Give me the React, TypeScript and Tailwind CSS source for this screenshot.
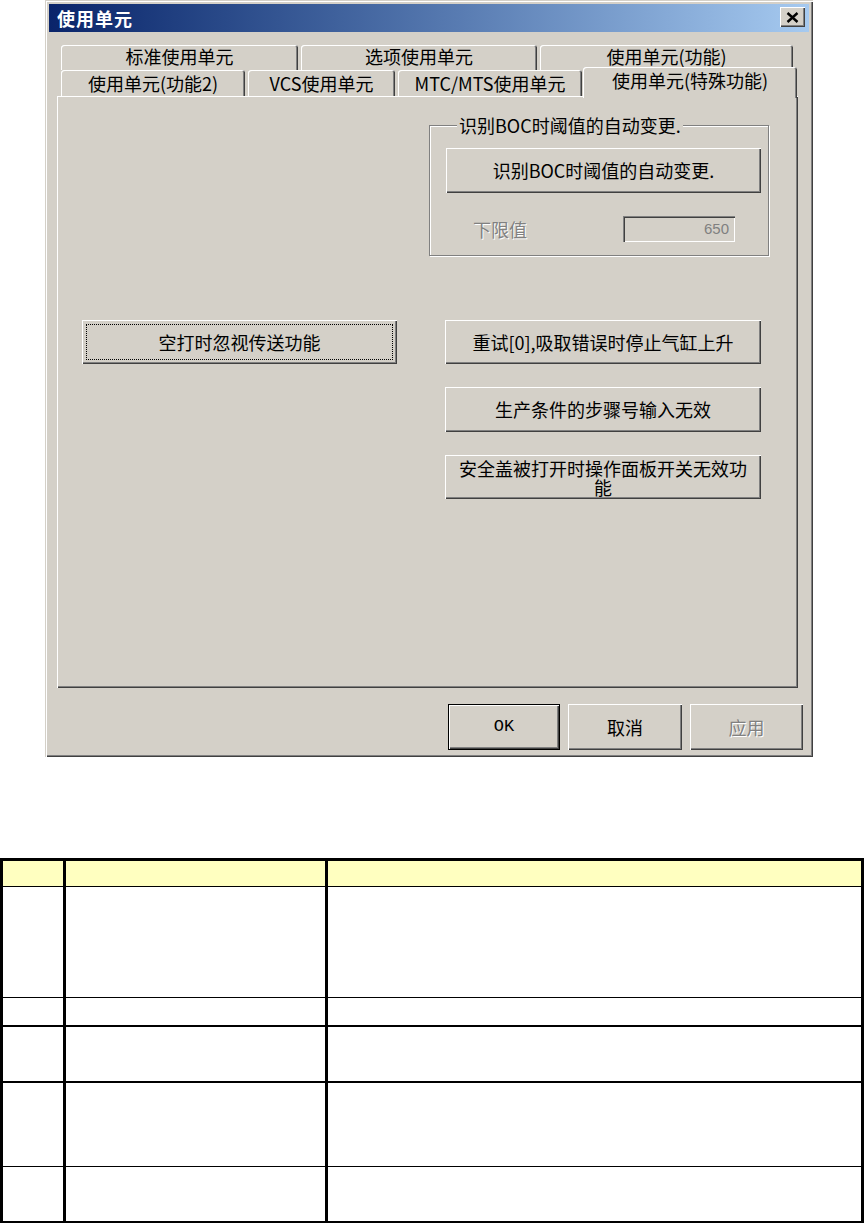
import React from 'react'

// classic win2000 bevels
const raised =
  'shadow-[inset_1px_1px_0_#ffffff,inset_-1px_-1px_0_#404040,inset_-2px_-2px_0_#808080]'
const defaultRaised =
  'shadow-[inset_0_0_0_1px_#000000,inset_2px_2px_0_#ffffff,inset_-2px_-2px_0_#404040,inset_-3px_-3px_0_#808080]'
const sunken =
  'shadow-[inset_1px_1px_0_#808080,inset_2px_2px_0_#404040,inset_-1px_-1px_0_#ffffff,inset_-2px_-2px_0_#d4d0c8]'
const tabEdge =
  'shadow-[inset_1px_1px_0_#ffffff,inset_-1px_0_0_#404040,inset_-2px_0_0_#808080]'
const disabledText = 'text-[#808080] [text-shadow:1px_1px_0_#ffffff]'

function Tab({ label, w, back = false }: { label: string; w: string; back?: boolean }) {
  return (
    <div
      className={`${w} h-full rounded-t-[3px] bg-[#d4d0c8] ${tabEdge} flex items-start justify-center ${back ? 'pt-[3px] leading-[16px]' : 'pt-[5px] leading-[17px]'} text-[18px] text-black`}
    >
      {label}
    </div>
  )
}

function Button({
  children,
  className = '',
}: {
  children: React.ReactNode
  className?: string
}) {
  return (
    <div
      className={`bg-[#d4d0c8] ${raised} flex items-center justify-center text-center text-[18px] leading-[19px] text-black ${className}`}
    >
      {children}
    </div>
  )
}

function TitleBar() {
  return (
    <div className="h-[28px] flex items-center justify-between bg-linear-to-r from-[#0a246a] to-[#a6caf0] pl-[8px] pr-[4px]">
      <span className="text-white font-bold text-[18px] leading-none tracking-[1px]">使用单元</span>
      <div className={`w-[25px] h-[20px] bg-[#d4d0c8] ${raised} flex items-center justify-center -mt-[2px]`}>
        <svg width="13" height="11" viewBox="0 0 13 11">
          <path d="M1.5 1 L11.5 10 M11.5 1 L1.5 10" stroke="#000" strokeWidth="2.4" fill="none" />
        </svg>
      </div>
    </div>
  )
}

function TabPanel() {
  return (
    <div className={`relative h-[592px] bg-[#d4d0c8] ${raised} flex items-start`}>
      {/* left column */}
      <div className="ml-[25px] mt-[224px] w-[315px]">
        <Button className="h-[44px] p-[4px]">
          <div className="w-full h-full border border-dotted border-black flex items-center justify-center">
            空打时忽视传送功能
          </div>
        </Button>
      </div>

      {/* right column */}
      <div className="ml-[32px] mt-[19px] w-[340px]">
        <fieldset className="border border-[#808080] shadow-[inset_1px_1px_0_#ffffff,1px_1px_0_#ffffff] pl-[16px] pr-[7px] pb-[13px]">
          <legend className="ml-[11px] px-[2px] bg-[#d4d0c8] text-[18px] leading-[20px] text-black">
            识别BOC时阈值的自动变更.
          </legend>
          <Button className="mt-[13px] w-[315px] h-[45px]">识别BOC时阈值的自动变更.</Button>
          <div className="mt-[23px] h-[26px] flex items-center">
            <span className={`ml-[27px] w-[150px] text-[18px] leading-none ${disabledText}`}>下限值</span>
            <div
              className={`w-[112px] h-[26px] bg-[#d4d0c8] ${sunken} flex items-center justify-end pr-[6px] font-['Liberation_Sans',sans-serif] text-[15px] text-[#808080]`}
            >
              650
            </div>
          </div>
        </fieldset>

        <div className="ml-[16px] w-[316px] flex flex-col">
          <Button className="mt-[64px] h-[44px]">重试[0],吸取错误时停止气缸上升</Button>
          <Button className="mt-[23px] h-[45px]">生产条件的步骤号输入无效</Button>
          <Button className="mt-[23px] h-[44px] px-[8px] pt-[2px]">安全盖被打开时操作面板开关无效功能</Button>
        </div>
      </div>
    </div>
  )
}

function Dialog() {
  return (
    <div className="ml-[45px] w-[768px] h-[757px] bg-[#d4d0c8] p-[4px] shadow-[inset_1px_1px_0_#d4d0c8,inset_2px_2px_0_#ffffff,inset_-1px_-1px_0_#404040,inset_-2px_-2px_0_#808080] flex flex-col">
      <TitleBar />

      <div className="mt-[13px] ml-[8px] w-[741px]">
        <div className="h-[25px] flex pl-[4px] gap-[3px]">
          <Tab label="标准使用单元" w="w-[237px]" back />
          <Tab label="选项使用单元" w="w-[236px]" back />
          <Tab label="使用单元(功能)" w="w-[253px]" back />
        </div>
        <div className="relative z-10 h-[26px] flex items-end pl-[4px]">
          <Tab label="使用单元(功能2)" w="w-[184px]" />
          <div className="w-[3px]" />
          <Tab label="VCS使用单元" w="w-[147px]" />
          <div className="w-[3px]" />
          <Tab label="MTC/MTS使用单元" w="w-[184px]" />
          <div className="w-[1px]" />
          <div
            className={`w-[214px] h-[31px] -mb-[2px] rounded-t-[3px] bg-[#d4d0c8] ${tabEdge} flex items-start justify-center pt-[5px] text-[18px] leading-[17px] text-black`}
          >
            使用单元(特殊功能)
          </div>
        </div>
        <TabPanel />
      </div>

      <div className="mt-[16px] flex justify-end gap-[8px] pr-[6px]">
        <div
          className={`w-[112px] h-[46px] bg-[#d4d0c8] ${defaultRaised} flex items-center justify-center font-['Liberation_Mono',monospace] text-[17px] text-black`}
        >
          OK
        </div>
        <Button className="w-[114px] h-[46px]">取消</Button>
        <Button className="w-[113px] h-[46px]">
          <span className={disabledText}>应用</span>
        </Button>
      </div>
    </div>
  )
}

function TableRow({
  h,
  border,
  head = false,
}: {
  h: string
  border: string
  head?: boolean
}) {
  return (
    <div className={`flex ${h} ${border} border-black ${head ? 'bg-[#ffffc0]' : 'bg-white'}`}>
      <div className="w-[63px] border-r-[3px] border-black" />
      <div className="w-[262px] border-r-[3px] border-black" />
      <div className="flex-1" />
    </div>
  )
}

export default function App() {
  return (
    <div className="min-h-screen bg-white font-['Noto_Sans_CJK_SC',sans-serif]">
      <Dialog />

      <div className="mt-[101px] border-x-[3px] border-t-[3px] border-b-[2px] border-black">
        <TableRow h="h-[26px]" border="border-b" head />
        <TableRow h="h-[111px]" border="border-b" />
        <TableRow h="h-[29px]" border="border-b-2" />
        <TableRow h="h-[56px]" border="border-b-2" />
        <TableRow h="h-[84px]" border="border-b" />
        <TableRow h="h-[54px]" border="border-b-0" />
      </div>
    </div>
  )
}
